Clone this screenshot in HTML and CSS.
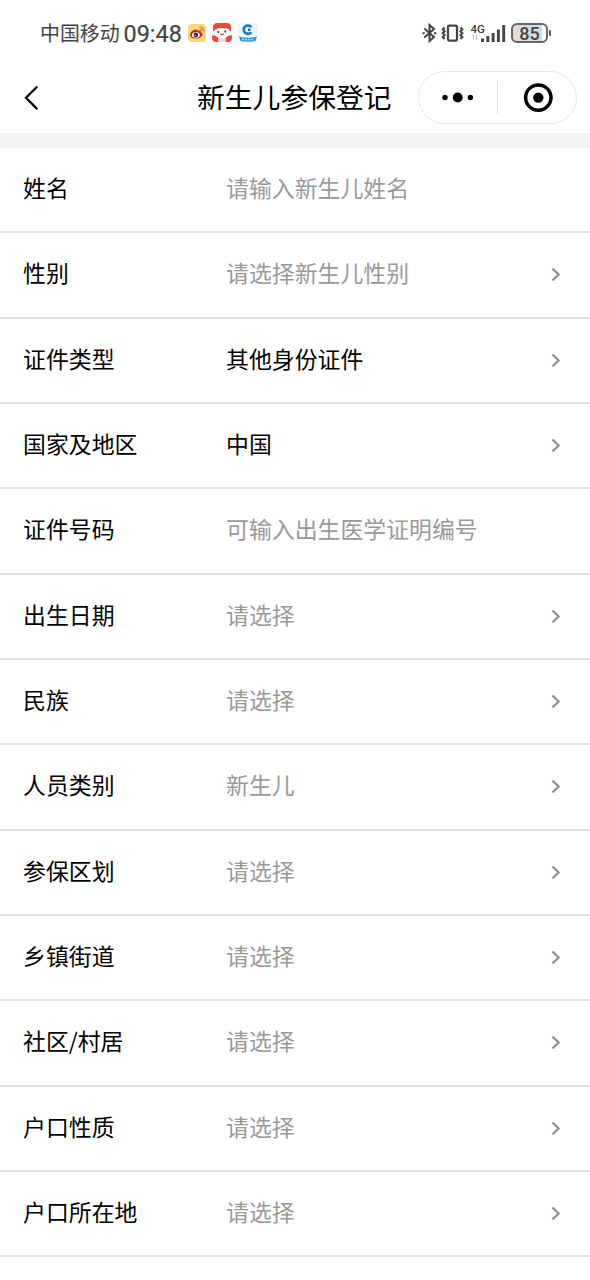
FILE: index.html
```
<!DOCTYPE html>
<html lang="zh-CN">
<head>
<meta charset="utf-8">
<title>新生儿参保登记</title>
<link rel="stylesheet" href="styles.css">
</head>
<body>
<svg class="defs" width="0" height="0"><symbol id="chev" viewBox="0 0 10 15"><path d="M1.400 1.500 7.600 7.500 1.400 13.500" fill="none" stroke="#929292" stroke-width="2.300"/></symbol></svg>
<div class="status">
  <span class="carrier">中国移动</span><span class="time">09:48</span>
  <div class="apps">
    <svg width="18" height="18" viewBox="0 0 18 18"><rect width="18" height="18" rx="4" fill="#fbd977"/><path d="M2 11C2 8 6 5 8.500 5.500 10 5.800 9.500 7 9.500 7 12 6 13.500 7 12.800 8.600 15 9.300 14.800 11 13.500 12.500 10.500 15.800 2.300 15 2 11Z" fill="#c9242a"/><ellipse cx="7.900" cy="11" rx="4" ry="2.700" fill="#fff"/><circle cx="7.800" cy="11" r="2.200" fill="#222"/><circle cx="7.200" cy="11.400" r=".6" fill="#fff"/><path d="M11.500 3.200C14.500 2.800 16.200 5 15.500 7.500M11.800 5.300C13.300 5.100 14 6 13.700 7.200" fill="none" stroke="#ef7d25" stroke-width="1.200"/></svg>
    <svg width="20" height="20" viewBox="0 0 20 20"><path d="M1 8V4Q1 0 5 0H15Q19 0 19 4V8Z" fill="#ed493f"/><path d="M3 6.500Q10 4 17 6L18 10 15.500 14.500H5L2 10Z" fill="#fff"/><path d="M0 12.500Q3 11.500 6.500 15V19H4Q1 19 0 15.500ZM20 12.500Q17 11.500 13.500 15V19H16Q19 19 20 15.500Z" fill="#ed493f"/><path d="M6.500 15Q10 16.500 13.500 15V18.500H6.500Z" fill="#f9d5d1"/><circle cx="6.500" cy="9" r="1" fill="#333"/><circle cx="13.300" cy="8.500" r="1" fill="#333"/><path d="M8 11Q10 12.500 12 10.800" fill="none" stroke="#555"/></svg>
    <svg width="20" height="20" viewBox="0 0 20 20"><rect width="20" height="20" rx="4" fill="#edf6fc"/><path d="M13.300 4.200A4.200 4.200 0 1 0 13.300 9.200" fill="none" stroke="#1677be" stroke-width="2.700"/><path d="M10 5.500H12.500V8H10Z" fill="#1677be"/><path d="M1 13.500Q10 16 19 13.500L17.500 18Q10 19.500 2.500 18Z" fill="#3896d5"/><path d="M4 16.300Q10 17.300 16 16.300" fill="none" stroke="#c6e4f6" stroke-width="1" stroke-dasharray="2 1"/></svg>
  </div>
  <div class="signals">
    <svg width="86" height="24" viewBox="0 0 86 24" fill="none" stroke="#444">
      <path d="M3.300 7.500 13 16 8.500 20V4L13 8 3.300 16.500" stroke-width="2"/><path d="M1.500 12.200H3.700M13 12.200H15.300" stroke-width="2"/>
      <rect x="27" y="4.600" width="9" height="15" rx="1" stroke-width="2.200"/><path d="M23.700 6.500 21.700 8.400 23.700 10.300 21.700 12.200 23.700 14.100 21.700 16 23.700 17.900M39.400 6.500 41.400 8.400 39.400 10.300 41.400 12.200 39.400 14.100 41.400 16 39.400 17.900" stroke-width="2"/>
      <text class="network" x="49.500" y="11.800">4G</text>
      <path d="M52.500 19V14L51 15.600M55.500 14V19L57 17.400" stroke="#bdbdbd" stroke-width="1"/>
      <path d="M61.500 17.500V21M66.800 15V21M72.100 12V21M77.400 8.500V21M82.700 4V21" stroke-width="2.900"/>
    </svg>
    <div class="battery">85</div><i class="battery-tip"></i>
  </div>
</div>
<header class="nav">
  <svg class="back" width="16" height="26" viewBox="0 0 16 26"><path d="M14.300 1.500 3 12.800 14.300 24.100" fill="none" stroke="#000" stroke-width="2.300"/></svg>
  <h1 class="title">新生儿参保登记</h1>
  <div class="capsule">
    <svg class="more" width="32" height="12" viewBox="0 0 32 12"><circle cx="3" cy="5.500" r="2.700"/><circle cx="15.700" cy="5.500" r="4.900"/><circle cx="28.400" cy="5.500" r="2.700"/></svg>
    <i class="divider"></i>
    <svg class="close" width="30" height="30" viewBox="0 0 30 30"><circle cx="15.300" cy="14.600" r="12.700" fill="none" stroke="#000" stroke-width="3.500"/><circle cx="15.300" cy="14.600" r="5.200"/></svg>
  </div>
</header>
<main class="form">
  <div class="row"><span class="label">姓名</span><span class="value hint">请输入新生儿姓名</span></div>
  <div class="row"><span class="label">性别</span><span class="value hint">请选择新生儿性别</span><svg class="arrow"><use href="#chev"/></svg></div>
  <div class="row"><span class="label">证件类型</span><span class="value">其他身份证件</span><svg class="arrow"><use href="#chev"/></svg></div>
  <div class="row"><span class="label">国家及地区</span><span class="value">中国</span><svg class="arrow"><use href="#chev"/></svg></div>
  <div class="row"><span class="label">证件号码</span><span class="value hint">可输入出生医学证明编号</span></div>
  <div class="row"><span class="label">出生日期</span><span class="value hint">请选择</span><svg class="arrow"><use href="#chev"/></svg></div>
  <div class="row"><span class="label">民族</span><span class="value hint">请选择</span><svg class="arrow"><use href="#chev"/></svg></div>
  <div class="row"><span class="label">人员类别</span><span class="value hint">新生儿</span><svg class="arrow"><use href="#chev"/></svg></div>
  <div class="row"><span class="label">参保区划</span><span class="value hint">请选择</span><svg class="arrow"><use href="#chev"/></svg></div>
  <div class="row"><span class="label">乡镇街道</span><span class="value hint">请选择</span><svg class="arrow"><use href="#chev"/></svg></div>
  <div class="row"><span class="label">社区/村居</span><span class="value hint">请选择</span><svg class="arrow"><use href="#chev"/></svg></div>
  <div class="row"><span class="label">户口性质</span><span class="value hint">请选择</span><svg class="arrow"><use href="#chev"/></svg></div>
  <div class="row"><span class="label">户口所在地</span><span class="value hint">请选择</span><svg class="arrow"><use href="#chev"/></svg></div>
</main>
</body>
</html>
```
FILE: styles.css
```
* { box-sizing: border-box; }
body {
  margin: 0;
  height: 1280px;
  overflow: hidden;
  background: #fff;
  color: #000;
  font-family: "Noto Sans CJK SC", sans-serif;
}
svg { display: block; flex: none; }
.defs { position: absolute; }
.status {
  display: flex;
  align-items: center;
  height: 66px;
  padding: 0 39px 0 40px;
  color: #444;
}
.carrier { font-size: 19.900px; line-height: 28px; }
.time {
  margin-left: 4px;
  padding-top: 2px;
  font: 400 23.400px/28px Roboto, sans-serif;
  -webkit-text-stroke: 0.2px #444;
}
.apps { display: flex; align-items: center; gap: 6px; margin-left: 6px; }
.signals { display: flex; align-items: center; margin-left: auto; }
.network { font: 500 11.500px Roboto, sans-serif; fill: #444; stroke: none; }
.battery {
  width: 37px;
  height: 20px;
  margin-left: 4px;
  border: 2px solid #666;
  border-radius: 6px;
  background: linear-gradient(to right, #dcdcdc 88%, #fff 88%);
  font: 500 18px/17px Roboto, sans-serif;
  text-align: center;
}
.battery-tip { width: 2px; height: 6px; margin-left: 1px; border-radius: 1px; background: #555; }
.nav {
  display: flex;
  align-items: center;
  height: 67px;
  padding: 0 13px 4px 23px;
}
.title {
  margin: 0 0 0 158px;
  padding-bottom: 3px;
  font-size: 27.800px;
  font-weight: 400;
  line-height: 40px;
  white-space: nowrap;
}
.capsule {
  display: flex;
  align-items: center;
  width: 159px;
  height: 53px;
  margin-left: auto;
  padding-left: 23px;
  border: 1px solid #e9e9e9;
  border-radius: 27px;
}
.divider { width: 1px; height: 32px; margin-left: 23px; background: #dedede; }
.close { margin-left: 25px; }
.form { border-top: 15px solid #f4f4f4; }
.row {
  display: flex;
  align-items: center;
  height: 85.330px;
  padding: 0 29px 0 23px;
  border-bottom: 2px solid #dfdfdf;
  font-size: 22.880px;
  line-height: 34px;
}
.label { width: 203px; padding-bottom: 5.400px; }
.value { padding-bottom: 5.400px; }
.hint { color: #999; }
.arrow { width: 10px; height: 15px; margin-left: auto; }
```
